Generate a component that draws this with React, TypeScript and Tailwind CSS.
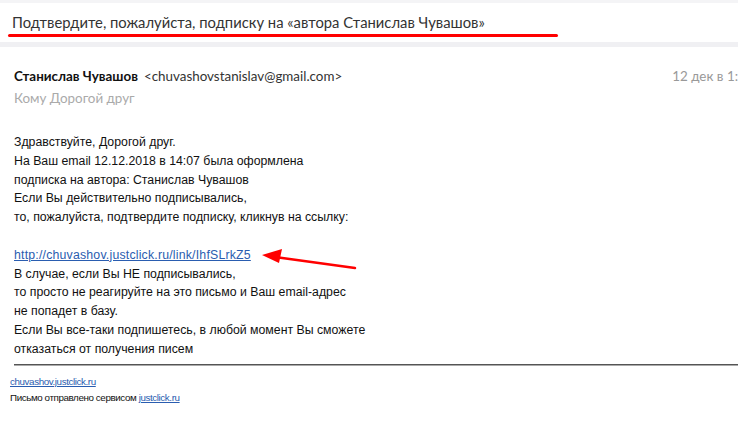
import React from "react";

export default function App() {
  return (
    <div className="w-[738px] h-[427px] bg-white overflow-hidden relative">
      <div className="h-[3px] bg-[#f4f4f6]" />
      <div className="h-[39px] pl-[12px] pt-[7px]">
        <span className="text-[14.8px] leading-[22px] text-[#333] font-['Lato',sans-serif]">
          Подтвердите, пожалуйста, подписку на «автора Станислав Чувашов»
        </span>
      </div>
      <div className="absolute left-[8px] top-[34px] w-[550px] h-[3px] bg-[#f00] rounded-full" />
      <div className="h-[5px] bg-[#f0f0f3]" />

      <div className="flex pl-[14px] pt-[20px] text-[13.4px] leading-[18px] font-['Lato',sans-serif]">
        <div className="whitespace-nowrap w-[662px]">
          <span className="font-bold text-[#111]">Станислав Чувашов</span>
          <span className="text-[#333] ml-[6px]">&lt;chuvashovstanislav@gmail.com&gt;</span>
        </div>
        <div className="text-[#999] whitespace-nowrap">12 дек в 1:</div>
      </div>
      <div className="pl-[14px] pt-[4px] text-[13.4px] leading-[18px] text-[#aaa] font-['Lato',sans-serif]">
        Кому Дорогой друг
      </div>

      <div className="pl-[14px] pt-[26px] text-[12.3px] leading-[18.8px] text-[#111] font-['Liberation_Sans',sans-serif]">
        <div>Здравствуйте, Дорогой друг.</div>
        <div>На Ваш email 12.12.2018 в 14:07 была оформлена</div>
        <div>подписка на автора: Станислав Чувашов</div>
        <div>Если Вы действительно подписывались,</div>
        <div>то, пожалуйста, подтвердите подписку, кликнув на ссылку:</div>
        <div>&nbsp;</div>
        <div>
          <a className="text-[#2a5db0] underline tracking-[0.2px]">http://chuvashov.justclick.ru/link/IhfSLrkZ5</a>
        </div>
        <div>В случае, если Вы НЕ подписывались,</div>
        <div>то просто не реагируйте на это письмо и Ваш email-адрес</div>
        <div>не попадет в базу.</div>
        <div>Если Вы все-таки подпишетесь, в любой момент Вы сможете</div>
        <div>отказаться от получения писем</div>
      </div>

      <div className="ml-[14px] mt-[5px] h-[2px] border-t border-[#555] border-b border-b-[#aaa]" />

      <div className="pl-[10px] pt-[8px] text-[9.8px] leading-[16px] tracking-[-0.4px] text-[#111] font-['Liberation_Sans',sans-serif]">
        <div><a className="text-[#2a5db0] underline">chuvashov.justclick.ru</a></div>
        <div>Письмо отправлено сервисом <a className="text-[#2a5db0] underline">justclick.ru</a></div>
      </div>

      <svg className="absolute left-0 top-0" width="738" height="427">
        <line x1="355" y1="268" x2="275" y2="257" stroke="#f00" strokeWidth="2.5" strokeLinecap="round" />
        <polygon points="262,255 282,249 279,263" fill="#f00" />
      </svg>
    </div>
  );
}
